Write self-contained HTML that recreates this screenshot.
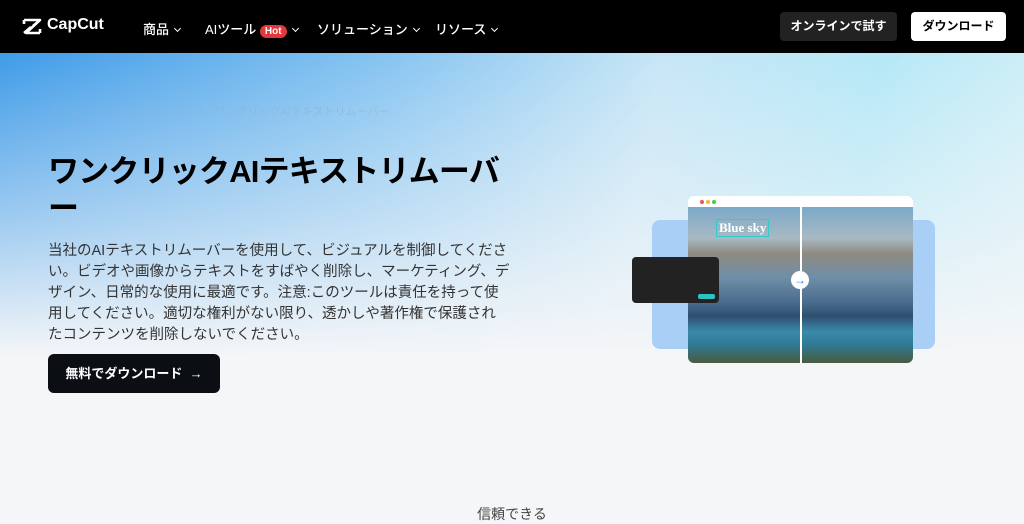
<!DOCTYPE html>
<html><head><meta charset="utf-8"><style>
*{margin:0;padding:0;box-sizing:border-box}
body{width:1024px;height:522px;overflow:hidden;font-family:"Liberation Sans","Noto Sans CJK JP",sans-serif;background:#f5f6f8;position:relative}
.nav{position:absolute;left:0;top:0;width:1024px;height:53px;background:#000;color:#fff}
.hero{position:absolute;top:53px;left:0;width:1024px;height:469px;
background:
linear-gradient(180deg,rgba(245,246,248,0) 0%,rgba(245,246,248,0.5) 35%,#f5f6f8 65%),
linear-gradient(100deg,#3f9be8 0%,#86c4f1 35%,#c7e6f6 60%,#b5e8f7 80%,#d9f1f7 100%);}
.ni{position:absolute;top:19px;font-size:13px;font-weight:500}
.ch{display:inline-block;width:5px;height:5px;border-right:1.3px solid #fff;border-bottom:1.3px solid #fff;transform:rotate(45deg);margin-left:6px;position:relative;top:-3px}
.btn{position:absolute;top:12px;height:29px;border-radius:4px;font-size:12px;font-weight:bold;text-align:center;line-height:29px}
</style></head><body>
<div class="nav">
<svg style="position:absolute;left:22px;top:18px" width="20" height="17" viewBox="0 0 20 17"><path d="M2 2h16l-14 13h14M2 2v4M18 15v-4M2 15l7-6M18 2l-7 6" stroke="#fff" stroke-width="2.6" fill="none" stroke-linejoin="round"/></svg>
<div style="position:absolute;left:47px;top:16px;font-size:16px;font-weight:bold">CapCut</div>
<div class="ni" style="left:143px">商品<span class="ch"></span></div>
<div class="ni" style="left:205px">AIツール <span style="background:#e5383b;border-radius:8px;padding:1px 5px;font-size:10px;font-weight:bold">Hot</span><span class="ch"></span></div>
<div class="ni" style="left:317px">ソリューション<span class="ch"></span></div>
<div class="ni" style="left:435px">リソース<span class="ch"></span></div>
<div class="btn" style="left:780px;width:117px;background:#222;color:#fff">オンラインで試す</div>
<div class="btn" style="left:911px;width:95px;background:#fff;color:#000">ダウンロード</div>
</div>
<div class="hero"></div>
<div style="position:absolute;left:48px;top:103px;font-size:11px;color:#8fb0cf;opacity:.5;white-space:nowrap">ホーム　&gt;　ライフスタイル　&gt;　ワンクリックAIテキストリムーバー</div>
<div style="position:absolute;left:48px;top:153px;font-size:31px;font-weight:bold;line-height:37px;color:#000;letter-spacing:-0.8px;white-space:nowrap">ワンクリックAIテキストリムーバ<br>ー</div>
<div style="position:absolute;left:48px;top:241px;width:462px;font-size:14.5px;line-height:21px;color:#333">当社のAIテキストリムーバーを使用して、ビジュアルを制御してください。ビデオや画像からテキストをすばやく削除し、マーケティング、デザイン、日常的な使用に最適です。注意:このツールは責任を持って使用してください。適切な権利がない限り、透かしや著作権で保護されたコンテンツを削除しないでください。</div>
<div style="position:absolute;left:48px;top:354px;width:172px;height:39px;background:#0b0f14;border-radius:6px;color:#fff;font-size:13px;font-weight:bold;line-height:39px;text-align:center">無料でダウンロード&nbsp; →</div>
<div style="position:absolute;left:652px;top:220px;width:283px;height:129px;background:#a9cff7;border-radius:8px"></div>
<div style="position:absolute;left:688px;top:196px;width:225px;height:167px;background:#fff;border-radius:6px;overflow:hidden">
<div style="position:absolute;left:12px;top:4px;width:4px;height:4px;border-radius:2px;background:#e55"></div>
<div style="position:absolute;left:18px;top:4px;width:4px;height:4px;border-radius:2px;background:#eb3"></div>
<div style="position:absolute;left:24px;top:4px;width:4px;height:4px;border-radius:2px;background:#4c4"></div>
<div style="position:absolute;left:0;top:11px;width:225px;height:156px;background:linear-gradient(180deg,#7ba9c8 0%,#a8b9c4 20%,#8f8a80 30%,#6f8fa8 45%,#4d6f90 60%,#2f4f6f 70%,#3a8aaa 80%,#2e7a95 88%,#4a5a40 100%)"></div>
<div style="position:absolute;left:112px;top:11px;width:2px;height:156px;background:#fff"></div>
<div style="position:absolute;left:28px;top:23px;font-family:'Liberation Serif',serif;font-weight:bold;color:#fff;font-size:13px;border:1px solid #3cc;padding:0 2px">Blue sky</div>
</div>
<div style="position:absolute;left:791px;top:271px;width:18px;height:18px;border-radius:9px;background:#fff;color:#2a7ae2;font-size:12px;text-align:center;line-height:18px;font-weight:bold">→</div>
<div style="position:absolute;left:632px;top:257px;width:87px;height:46px;background:#222;border-radius:4px">
<div style="position:absolute;right:4px;bottom:4px;width:17px;height:5px;background:#2bc3c3;border-radius:2px"></div></div>
<div style="position:absolute;left:0;top:504px;width:1024px;text-align:center;font-size:14px;color:#444">信頼できる</div>
</body></html>
